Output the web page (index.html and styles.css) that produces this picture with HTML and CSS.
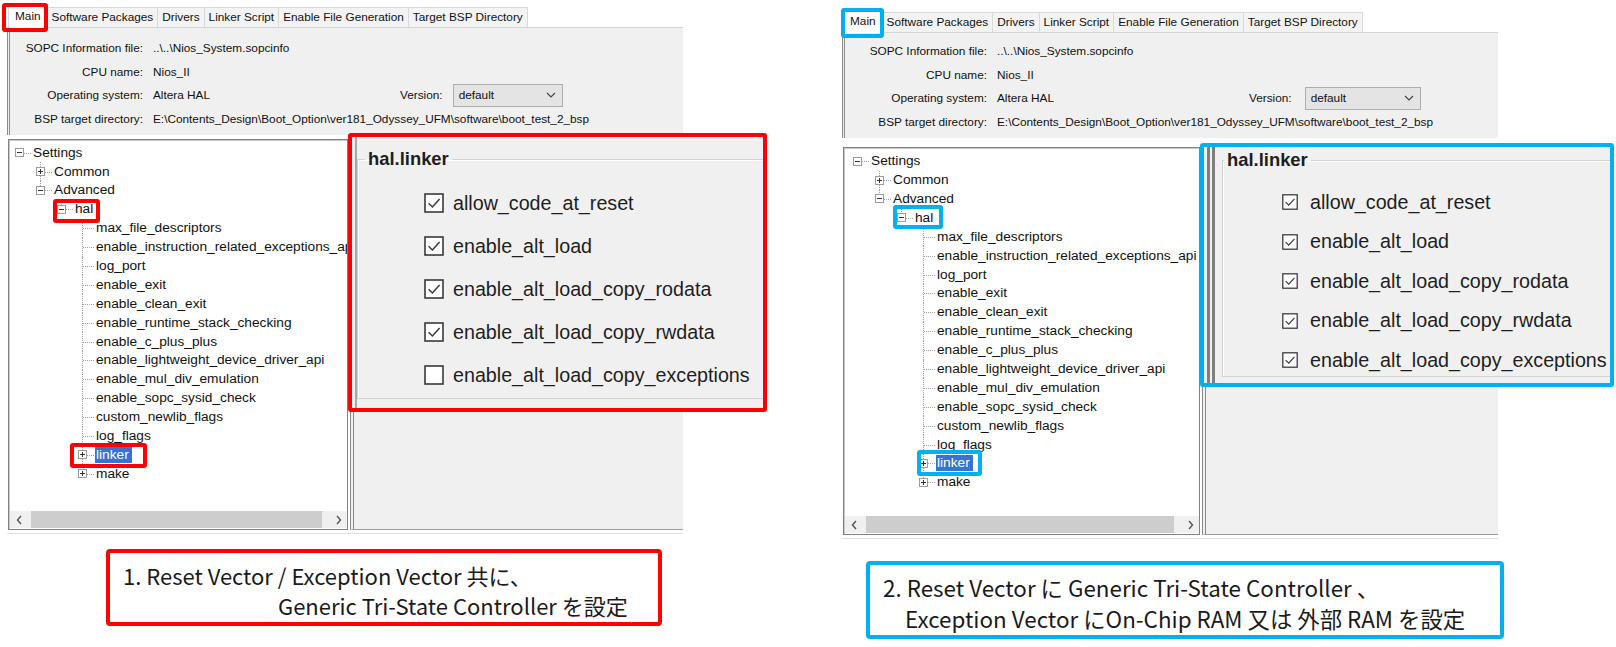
FILE: index.html
```html
<!DOCTYPE html>
<html lang="ja">
<head>
  <meta charset="UTF-8" />
  <title>BSP Editor - hal.linker</title>
  <link rel="stylesheet" href="styles.css">
</head>
<body>

<svg class="defs" aria-hidden="true">
  <symbol id="ck-on" viewBox="0 0 20 20">
    <rect x="1" y="1" width="18" height="18" fill="#fff" stroke="#3a3a3a" stroke-width="1.6"/>
    <path d="M4.6 10.2 L8.4 14 L15.6 6" fill="none" stroke="#3a3a3a" stroke-width="1.5"/>
  </symbol>
  <symbol id="ck-off" viewBox="0 0 20 20">
    <rect x="1" y="1" width="18" height="18" fill="#fff" stroke="#3a3a3a" stroke-width="1.6"/>
  </symbol>
  <symbol id="chev" viewBox="0 0 10 6">
    <path d="M1 1 L5 5 L9 1" fill="none" stroke="#444" stroke-width="1.1"/>
  </symbol>
  <symbol id="arr-l" viewBox="0 0 6 10">
    <path d="M5 1 L1.5 5 L5 9" fill="none" stroke="#555" stroke-width="1.4"/>
  </symbol>
  <symbol id="arr-r" viewBox="0 0 6 10">
    <path d="M1 1 L4.5 5 L1 9" fill="none" stroke="#555" stroke-width="1.4"/>
  </symbol>
</svg>

<div class="slide">

  <!-- 1: both vectors on the tri-state controller -->
  <section class="figure figure-a">
    <div class="window window-a">
      <div class="tabs">
        <div class="tab active">Main<span class="mark mark-red mark-tab"></span></div>
        <div class="tab">Software Packages</div>
        <div class="tab">Drivers</div>
        <div class="tab">Linker Script</div>
        <div class="tab">Enable File Generation</div>
        <div class="tab">Target BSP Directory</div>
      </div>
      <div class="info">
        <div class="info-row"><span class="info-label">SOPC Information file:</span><span class="info-value">..\..\Nios_System.sopcinfo</span></div>
        <div class="info-row"><span class="info-label">CPU name:</span><span class="info-value">Nios_II</span></div>
        <div class="info-row"><span class="info-label">Operating system:</span><span class="info-value os">Altera HAL</span><span class="version-label">Version:</span><span class="select">default<svg class="chev"><use href="#chev"/></svg></span></div>
        <div class="info-row"><span class="info-label">BSP target directory:</span><span class="info-value">E:\Contents_Design\Boot_Option\ver181_Odyssey_UFM\software\boot_test_2_bsp</span></div>
      </div>
      <div class="split">
        <div class="tree-pane">
          <div class="tree">
            <div class="node lv0 root"><span class="twig"><span class="toggle"></span></span><span class="label">Settings</span></div>
            <div class="node lv1"><span class="twig"><span class="toggle plus"></span></span><span class="label">Common</span></div>
            <div class="node lv1 last"><span class="twig"><span class="toggle"></span></span><span class="label">Advanced</span></div>
            <div class="node lv2 last"><span class="twig"><span class="toggle"></span></span><span class="label">hal</span><span class="mark mark-red mark-hal"></span></div>
            <div class="node lv3"><span class="twig"></span><span class="label">max_file_descriptors</span></div>
            <div class="node lv3"><span class="twig"></span><span class="label">enable_instruction_related_exceptions_api</span></div>
            <div class="node lv3"><span class="twig"></span><span class="label">log_port</span></div>
            <div class="node lv3"><span class="twig"></span><span class="label">enable_exit</span></div>
            <div class="node lv3"><span class="twig"></span><span class="label">enable_clean_exit</span></div>
            <div class="node lv3"><span class="twig"></span><span class="label">enable_runtime_stack_checking</span></div>
            <div class="node lv3"><span class="twig"></span><span class="label">enable_c_plus_plus</span></div>
            <div class="node lv3"><span class="twig"></span><span class="label">enable_lightweight_device_driver_api</span></div>
            <div class="node lv3"><span class="twig"></span><span class="label">enable_mul_div_emulation</span></div>
            <div class="node lv3"><span class="twig"></span><span class="label">enable_sopc_sysid_check</span></div>
            <div class="node lv3"><span class="twig"></span><span class="label">custom_newlib_flags</span></div>
            <div class="node lv3"><span class="twig"></span><span class="label">log_flags</span></div>
            <div class="node lv3"><span class="twig"><span class="toggle plus"></span></span><span class="label selected">linker</span><span class="mark mark-red mark-linker"></span></div>
            <div class="node lv3 last"><span class="twig"><span class="toggle plus"></span></span><span class="label">make</span></div>
          </div>
          <div class="hscroll">
            <span class="arrow"><svg><use href="#arr-l"/></svg></span>
            <span class="thumb"></span>
            <span class="arrow"><svg><use href="#arr-r"/></svg></span>
          </div>
        </div>
        <div class="detail-pane"></div>
      </div>
    </div>

    <div class="callout callout-red">
      <div class="callout-pane">
        <fieldset class="group">
          <legend>hal.linker</legend>
          <div class="opts">
            <div class="opt"><svg class="check"><use href="#ck-on"/></svg><span>allow_code_at_reset</span></div>
            <div class="opt"><svg class="check"><use href="#ck-on"/></svg><span>enable_alt_load</span></div>
            <div class="opt"><svg class="check"><use href="#ck-on"/></svg><span>enable_alt_load_copy_rodata</span></div>
            <div class="opt"><svg class="check"><use href="#ck-on"/></svg><span>enable_alt_load_copy_rwdata</span></div>
            <div class="opt"><svg class="check"><use href="#ck-off"/></svg><span>enable_alt_load_copy_exceptions</span></div>
          </div>
        </fieldset>
      </div>
    </div>

    <div class="note note-red">
      <span class="note-line">1. Reset Vector / Exception Vector 共に、</span>
      <span class="note-line line-2">Generic Tri-State Controller を設定</span>
    </div>
  </section>

  <!-- 2: exceptions moved to on-chip / external RAM -->
  <section class="figure figure-b">
    <div class="window window-b">
      <div class="tabs">
        <div class="tab active">Main<span class="mark mark-blue mark-tab"></span></div>
        <div class="tab">Software Packages</div>
        <div class="tab">Drivers</div>
        <div class="tab">Linker Script</div>
        <div class="tab">Enable File Generation</div>
        <div class="tab">Target BSP Directory</div>
      </div>
      <div class="info">
        <div class="info-row"><span class="info-label">SOPC Information file:</span><span class="info-value">..\..\Nios_System.sopcinfo</span></div>
        <div class="info-row"><span class="info-label">CPU name:</span><span class="info-value">Nios_II</span></div>
        <div class="info-row"><span class="info-label">Operating system:</span><span class="info-value os">Altera HAL</span><span class="version-label">Version:</span><span class="select">default<svg class="chev"><use href="#chev"/></svg></span></div>
        <div class="info-row"><span class="info-label">BSP target directory:</span><span class="info-value">E:\Contents_Design\Boot_Option\ver181_Odyssey_UFM\software\boot_test_2_bsp</span></div>
      </div>
      <div class="split">
        <div class="tree-pane">
          <div class="tree">
            <div class="node lv0 root"><span class="twig"><span class="toggle"></span></span><span class="label">Settings</span></div>
            <div class="node lv1"><span class="twig"><span class="toggle plus"></span></span><span class="label">Common</span></div>
            <div class="node lv1 last"><span class="twig"><span class="toggle"></span></span><span class="label">Advanced</span></div>
            <div class="node lv2 last"><span class="twig"><span class="toggle"></span></span><span class="label">hal</span><span class="mark mark-blue mark-hal"></span></div>
            <div class="node lv3"><span class="twig"></span><span class="label">max_file_descriptors</span></div>
            <div class="node lv3"><span class="twig"></span><span class="label">enable_instruction_related_exceptions_api</span></div>
            <div class="node lv3"><span class="twig"></span><span class="label">log_port</span></div>
            <div class="node lv3"><span class="twig"></span><span class="label">enable_exit</span></div>
            <div class="node lv3"><span class="twig"></span><span class="label">enable_clean_exit</span></div>
            <div class="node lv3"><span class="twig"></span><span class="label">enable_runtime_stack_checking</span></div>
            <div class="node lv3"><span class="twig"></span><span class="label">enable_c_plus_plus</span></div>
            <div class="node lv3"><span class="twig"></span><span class="label">enable_lightweight_device_driver_api</span></div>
            <div class="node lv3"><span class="twig"></span><span class="label">enable_mul_div_emulation</span></div>
            <div class="node lv3"><span class="twig"></span><span class="label">enable_sopc_sysid_check</span></div>
            <div class="node lv3"><span class="twig"></span><span class="label">custom_newlib_flags</span></div>
            <div class="node lv3"><span class="twig"></span><span class="label">log_flags</span></div>
            <div class="node lv3"><span class="twig"><span class="toggle plus"></span></span><span class="label selected">linker</span><span class="mark mark-blue mark-linker"></span></div>
            <div class="node lv3 last"><span class="twig"><span class="toggle plus"></span></span><span class="label">make</span></div>
          </div>
          <div class="hscroll">
            <span class="arrow"><svg><use href="#arr-l"/></svg></span>
            <span class="thumb"></span>
            <span class="arrow"><svg><use href="#arr-r"/></svg></span>
          </div>
        </div>
        <div class="detail-pane"></div>
      </div>
    </div>

    <div class="callout callout-blue">
      <div class="callout-pane">
        <fieldset class="group">
          <legend>hal.linker</legend>
          <div class="opts">
            <div class="opt"><svg class="check"><use href="#ck-on"/></svg><span>allow_code_at_reset</span></div>
            <div class="opt"><svg class="check"><use href="#ck-on"/></svg><span>enable_alt_load</span></div>
            <div class="opt"><svg class="check"><use href="#ck-on"/></svg><span>enable_alt_load_copy_rodata</span></div>
            <div class="opt"><svg class="check"><use href="#ck-on"/></svg><span>enable_alt_load_copy_rwdata</span></div>
            <div class="opt"><svg class="check"><use href="#ck-on"/></svg><span>enable_alt_load_copy_exceptions</span></div>
          </div>
        </fieldset>
      </div>
    </div>

    <div class="note note-blue">
      <span class="note-line">2. Reset Vector に Generic Tri-State Controller 、</span>
      <span class="note-line line-2">Exception Vector にOn-Chip RAM 又は 外部 RAM を設定</span>
    </div>
  </section>

</div>

</body>
</html>
```

FILE: styles.css
```css
* { box-sizing: border-box; }
html, body { margin: 0; }
body {
  background: #fff;
  width: 1616px;
  height: 647px;
  overflow: hidden;
}
.defs { position: absolute; width: 0; height: 0; }

.slide {
  display: flex;
  height: 647px;
}
.figure {
  position: relative;
  display: flex;
  flex-direction: column;
  align-items: flex-start;
}
.figure-a { width: 800px; padding: 5px 0 0 7px; }
.figure-b { flex: 1; padding: 10px 0 0 42px; }

/* ---- BSP editor window ---- */
.window {
  position: relative;
  display: flex;
  flex-direction: column;
  font-family: "Liberation Sans", Arial, sans-serif;
  font-size: 11.8px;
  color: #111;
}
.window::after {
  content: "";
  position: absolute;
  left: 0; right: 0; bottom: -4px;
  height: 1px;
  background: #e0e0e0;
}
.window-a {
  width: 676px;
  height: 525px;
  --indent: 21px;
  --label-w: 133px;
  --os-w: 247px;
  --sel-gap: 10px;
  --sel-w: 110px;
}
.window-b {
  width: 656px;
  height: 525px;
  --indent: 22px;
  --label-w: 142px;
  --os-w: 252px;
  --sel-gap: 13px;
  --sel-w: 116px;
}

.tabs {
  display: flex;
  align-items: flex-end;
  flex: none;
  height: 23px;
  padding-left: 1px;
  border-bottom: 1px solid #d4d4d4;
}
.tab {
  position: relative;
  height: 20px;
  padding: 0 4px;
  margin-right: -1px;
  border: 1px solid #d9d9d9;
  border-bottom: none;
  background: #f3f3f3;
  line-height: 19px;
  white-space: nowrap;
}
.tab.active {
  height: 24px;
  margin-bottom: -1px;
  padding: 0 6px;
  background: #fff;
  line-height: 22px;
  z-index: 1;
}

.info {
  flex: none;
  background: #f0f0f0;
  border-left: 3px double #8c8c8c;
  padding: 8px 0 4px;
}
.window-b .info { padding-top: 6px; }
.info-row {
  display: flex;
  align-items: center;
  height: 23.7px;
  white-space: nowrap;
}
.info-label {
  width: var(--label-w);
  text-align: right;
  flex: none;
}
.info-value { margin-left: 10px; }
.info-value.os { width: var(--os-w); flex: none; }
.select {
  display: flex;
  align-items: center;
  justify-content: space-between;
  width: var(--sel-w);
  height: 23px;
  margin-left: var(--sel-gap);
  padding: 0 6px 0 5px;
  background: #e4e4e4;
  border: 1px solid #adadad;
}
.chev { width: 10px; height: 6px; }

.split {
  display: flex;
  flex: 1;
  min-height: 0;
  margin-top: 4px;
}
.window-b .split { margin-top: 9px; }

.tree-pane {
  display: flex;
  flex-direction: column;
  margin-left: 1px;
  background: #fff;
  border: 1px solid #828282;
  box-shadow: inset 1px 1px 0 #c8c8c8;
}
.window-a .tree-pane { width: 340px; }
.window-b .tree-pane { width: 357px; }
.tree {
  flex: 1;
  padding: 3.5px 0 0 6px;
  font-size: 13.7px;
  white-space: nowrap;
  overflow: hidden;
  color: #111;
}
.window-b .tree { padding: 4px 0 0 9px; }

.node {
  position: relative;
  display: flex;
  align-items: center;
  height: 18.9px;
  padding-left: calc(var(--lvl) * var(--indent));
}
.lv0 { --lvl: 0; }
.lv1 { --lvl: 1; }
.lv2 { --lvl: 2; }
.lv3 { --lvl: 3; }
.twig {
  position: relative;
  flex: none;
  width: 17px;
  height: 100%;
}
.twig::before {
  content: "";
  position: absolute;
  left: 4px; top: 0; bottom: 0;
  border-left: 1px dotted #a0a0a0;
}
.twig::after {
  content: "";
  position: absolute;
  left: 5px; right: 1px; top: 50%;
  border-top: 1px dotted #a0a0a0;
}
.last > .twig::before { bottom: 50%; }
.root > .twig::before { display: none; }
.toggle {
  position: absolute;
  left: 0;
  top: calc(50% - 4.5px);
  width: 9px;
  height: 9px;
  border: 1px solid #9c9c9c;
  background: #fff;
  z-index: 1;
}
.toggle::before {
  content: "";
  position: absolute;
  left: 1px; right: 1px; top: 3px;
  height: 1px;
  background: #333;
}
.toggle.plus::after {
  content: "";
  position: absolute;
  top: 1px; bottom: 1px; left: 3px;
  width: 1px;
  background: #333;
}
.label { padding: 0 1px; line-height: 16px; }
.label.selected { background: #3574d4; color: #fff; padding-right: 3px; }

.hscroll {
  flex: none;
  display: flex;
  height: 17px;
  margin: 0 0 1px 1px;
  background: #f0f0f0;
}
.hscroll .arrow {
  width: 17px;
  display: flex;
  align-items: center;
  justify-content: center;
}
.hscroll .arrow svg { width: 6px; height: 10px; }
.hscroll .thumb {
  flex: 1;
  margin: 0 8px 0 4px;
  background: #cdcdcd;
}

.detail-pane {
  flex: 1;
  margin-left: 2px;
  background: #f0f0f0;
  border-left: 4px double #8a8a8a;
  border-bottom: 1px solid #9a9a9a;
}

/* highlight frames drawn over the screenshots */
.mark {
  position: absolute;
  border: 4px solid;
  border-radius: 3px;
  z-index: 2;
}
.mark-red { border-color: #f00; }
.mark-blue { border-color: #00b0f0; }
.window-a .mark-tab { left: -7px; right: -1px; top: -2px; bottom: -4px; }
.window-b .mark-tab { left: -3px; right: -2px; top: -2px; bottom: -5px; }
.window-a .mark-hal { left: 38px; top: -1px; width: 47px; height: 24px; }
.window-a .mark-linker { left: 55px; top: -3px; width: 77px; height: 25px; }
.window-b .mark-hal { left: 40px; top: -3px; width: 50px; height: 24px; }
.window-b .mark-linker { left: 64px; top: -4px; width: 65px; height: 26px; }

/* enlarged hal.linker panel */
.callout {
  position: absolute;
  display: flex;
  border: 4px solid;
  border-radius: 3px;
  background: #f0f0f0;
  overflow: hidden;
  font-family: "Liberation Sans", Arial, sans-serif;
  color: #1e1e1e;
}
.callout-red { border-color: #f00; left: 348px; top: 133px; width: 419px; height: 279px; }
.callout-blue { border-color: #00b0f0; left: 400px; top: 143px; width: 414px; height: 244px; }
.callout-pane { flex: 1; margin-left: 3px; }
.callout-red .callout-pane { border-left: 2px solid #a8a8a8; }
.callout-blue .callout-pane { border-left: 8px double #7f7f7f; padding-left: 7px; }

.group {
  margin: 0;
  padding: 0;
  min-width: 0;
  border: 1px solid #d3d3d3;
  border-right: none;
  box-shadow: inset 1px 1px 0 #fff;
}
.group legend {
  margin-left: 7px;
  padding: 0 3px;
  font-weight: bold;
  font-size: 18.4px;
  line-height: 20px;
}
.callout-red .group { margin-top: 12px; }
.callout-blue .group { margin-top: 3px; }
.callout-blue .group legend { margin-left: 1px; }

.opts { display: flex; flex-direction: column; }
.opt {
  display: flex;
  align-items: center;
  font-size: 19.7px;
  white-space: nowrap;
}
.check { flex: none; }
.callout-red .opts { padding: 23px 0 12px 66px; gap: 21px; }
.callout-red .opt { height: 22px; gap: 9px; }
.callout-red .check { width: 20px; height: 20px; }
.callout-blue .opts { padding: 22px 0 6px 59px; gap: 19.5px; }
.callout-blue .opt { height: 20px; gap: 12px; }
.callout-blue .check { width: 16px; height: 16px; }

/* slide captions */
.note {
  display: flex;
  flex-direction: column;
  border: 4px solid;
  border-radius: 4px;
  background: #fff;
  font-family: "Noto Sans CJK JP", "Liberation Sans", sans-serif;
  color: #1a1a1a;
  white-space: nowrap;
}
.note-red {
  border-color: #f00;
  width: 556px;
  height: 77px;
  margin: 19px 0 0 99px;
  padding: 7px 0 0 13px;
  font-size: 22px;
  line-height: 30px;
}
.note-red .line-2 { padding-left: 155px; }
.note-blue {
  border-color: #00b0f0;
  width: 638px;
  height: 78px;
  margin: 26px 0 0 24px;
  padding: 7px 0 0 13px;
  font-size: 22.4px;
  line-height: 31px;
}
.note-blue .line-2 { padding-left: 22px; }
```
